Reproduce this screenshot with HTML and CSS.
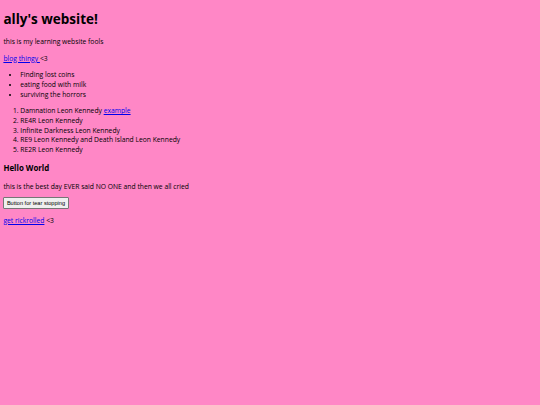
FILE: index.html
```html
<!DOCTYPE html>
<html>
<head>
<meta charset="utf-8">
<title>ally's website!</title>
<link rel="stylesheet" href="styles.css">
</head>
<body>
<h1 class="title">ally's website!</h1>
<p class="text">this is my learning website fools</p>
<p class="text"><a class="link" href="#">blog thingy </a>&lt;3</p>
<ul class="list">
<li>Finding lost coins</li>
<li>eating food with milk</li>
<li>surviving the horrors</li>
</ul>
<ol class="list">
<li>Damnation Leon Kennedy <a class="link" href="#">example</a></li>
<li>RE4R Leon Kennedy</li>
<li>Infinite Darkness Leon Kennedy</li>
<li>RE9 Leon Kennedy and Death Island Leon Kennedy</li>
<li>RE2R Leon Kennedy</li>
</ol>
<h3 class="heading">Hello World</h3>
<p class="text text-tight">this is the best day EVER said NO ONE and then we all cried</p>
<button class="btn" type="button">Button for tear stopping</button>
<p class="text"><a class="link" href="#">get rickrolled</a> &lt;3</p>
</body>
</html>
```
FILE: styles.css
```css
html {
  font-size: 6.75px;
  background: #ff87c6;
}
body {
  margin: 3.4px;
  font-family: "Comic Sans MS", "Open Sans", sans-serif;
  font-size: 6.75px;
  line-height: 1.45;
  color: #000;
}
.title {
  font-size: 2em;
  margin: 0.67em 0;
  line-height: 1.15;
}
.text {
  margin: 1em 0;
}
.text-tight {
  margin-bottom: 0.8em;
}
.list {
  margin: 1em 0;
  padding-left: 2.5em;
}
.heading {
  font-size: 1.17em;
  margin: 1em 0;
  line-height: 1.45;
}
.link {
  color: #0000ee;
}
.btn {
  font-family: "Liberation Sans", Arial, sans-serif;
  font-size: 5.6px;
  padding: 1.5px 2.5px;
  margin: 0;
  background: #efefef;
  border: 1px solid #767676;
  border-radius: 1px;
  color: #000;
  line-height: 1.15;
}
```
